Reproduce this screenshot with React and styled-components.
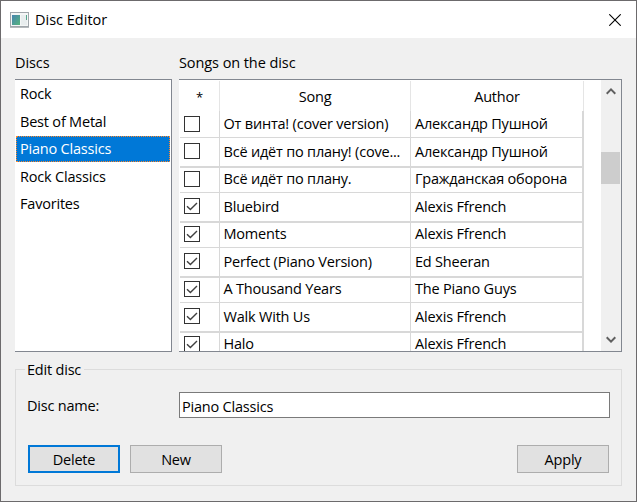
import React from "react";
import styled, { createGlobalStyle, css } from "styled-components";

const Global = createGlobalStyle`
  * { box-sizing: border-box; }
  body { margin: 0; overflow: hidden; }
`;

const Window = styled.div`
  width: 637px;
  height: 502px;
  display: flex;
  flex-direction: column;
  border: 1px solid #6c6a6c;
  background: #f0f0f0;
  color: #000;
  font: 14.5px/20px "Open Sans", "Noto Sans", sans-serif;
  letter-spacing: -0.2px;
`;

const TitleBar = styled.header`
  height: 37px;
  flex: none;
  display: flex;
  align-items: center;
  padding: 0 15px 0 9px;
  background: #fff;
`;

const Title = styled.span`
  flex: 1;
  margin-left: 6px;
  letter-spacing: 0;
`;

const Body = styled.main`
  flex: 1;
  display: flex;
  flex-direction: column;
  padding: 15px 14px;
`;

const Columns = styled.div`
  display: grid;
  grid-template-columns: 157px 443px;
  column-gap: 7px;
`;

const Label = styled.div`
  white-space: nowrap;
  letter-spacing: -0.08px;
`;

const ListBox = styled.div`
  height: 273px;
  margin-top: 6px;
  padding: 1px 1px 0;
  display: flex;
  flex-direction: column;
  gap: 1.5px;
  background: #fff;
  border: 1px solid #828790;
  border-left: 0;
`;

const ListItem = styled.div`
  height: 26px;
  padding-left: 4px;
  line-height: 25px;
  ${(p) =>
    p.$selected &&
    css`
      padding-left: 3px;
      line-height: 23px;
      color: #fff;
      background: #0078d7;
      border: 1px dotted #ff8728;
    `}
`;

const TableBox = styled.div`
  height: 273px;
  margin-top: 6px;
  display: flex;
  justify-content: space-between;
  background: #fff;
  border: 1px solid #828790;
  border-left: 0;
  overflow: hidden;
`;

const Table = styled.div`
  width: 405px;
  padding-left: 1px;
`;

const HeaderRow = styled.div`
  height: 31px;
  padding-top: 1px;
  display: grid;
  grid-template-columns: 40px 191px 173px;
`;

const HeaderCell = styled.div`
  border-right: 1px solid #e5e5e5;
  text-align: center;
  line-height: 32px;
  font-size: ${(p) => (p.$small ? "13px" : "inherit")};
`;

const Row = styled.div`
  display: grid;
  grid-template-columns: 40px 191px 173px;
  height: ${(p) => (p.$even ? 28 : 27)}px;
`;

const Cell = styled.div`
  border-right: ${(p) => (p.$last ? 2 : 1)}px solid #d8d8d8;
  border-bottom: ${(p) => (p.$even ? 2 : 1)}px solid #d8d8d8;
  padding-left: 4px;
  line-height: ${(p) => (p.$even ? 28 : 26)}px;
  white-space: nowrap;
`;

const SongCell = styled(Cell)`
  padding-left: 3.5px;
`;

const CheckBox = styled.span`
  display: block;
  width: 16px;
  height: 16px;
  margin-top: 5px;
  border: 1px solid #333;
  background: #fff;
  svg { display: block; }
`;

const ScrollBar = styled.div`
  width: 20px;
  display: flex;
  flex-direction: column;
  align-items: center;
  padding: 7px 1px 7px 0;
  background: #f0f0f0;
`;

const Thumb = styled.div`
  width: 19px;
  height: 32px;
  margin: 57px 0 auto;
  background: #cdcdcd;
`;

const Frame = styled.fieldset`
  width: 607px;
  height: 127px;
  margin: 7px 0 0;
  padding: 13px 11px 0;
  border: 1px solid #dcdcdc;
`;

const Legend = styled.legend`
  margin-left: -2px;
  padding: 0 3px 0 2px;
  height: 20px;
  line-height: 22px;
`;

const Field = styled.div`
  display: flex;
  align-items: center;
  height: 26px;
`;

const FieldLabel = styled.label`
  width: 152px;
  padding-top: 2px;
`;

const Input = styled.div`
  width: 431px;
  height: 26px;
  padding-left: 2px;
  line-height: 27px;
  background: #fff;
  border: 1px solid #7a7a7a;
`;

const Buttons = styled.div`
  display: flex;
  gap: 10px;
  margin: 27px 1px 0;
`;

const Button = styled.button`
  width: 92px;
  height: 28px;
  padding: 2px 0 0;
  margin-left: ${(p) => (p.$end ? "auto" : "0")};
  font: inherit;
  letter-spacing: inherit;
  color: #000;
  background: #e1e1e1;
  border: ${(p) => (p.$focus ? "2px solid #0078d7" : "1px solid #adadad")};
`;

const AppIcon = () => (
  <svg width="19" height="16" viewBox="0 0 19 16">
    <defs>
      <linearGradient id="screen" x1="0" y1="0" x2="1" y2="1">
        <stop offset="0" stopColor="#4784b0" />
        <stop offset="1" stopColor="#55b47c" />
      </linearGradient>
    </defs>
    <rect x="0.5" y="0.5" width="18" height="14" fill="#f4f6f6" stroke="#a0a6ab" />
    <rect x="2" y="3" width="8" height="10" fill="url(#screen)" />
    <rect x="11" y="3" width="6" height="10" fill="#e8edee" />
    <path d="M16.5 3v5" stroke="#54a58c" strokeWidth="1" />
    <path d="M0 15.5h19" stroke="#b5b9bc" />
  </svg>
);

const CloseIcon = () => (
  <svg width="12" height="12" viewBox="0 0 12 12">
    <path d="M0.3 0.3L11.7 11.7M11.7 0.3L0.3 11.7" stroke="#000" strokeWidth="1.1" />
  </svg>
);

const Chevron = ({ down }) => (
  <svg width="10" height="8" viewBox="0 0 10 8">
    <path d={down ? "M0.7 1.3L5 5.6L9.3 1.3" : "M0.7 6.7L5 2.4L9.3 6.7"} fill="none" stroke="#606060" strokeWidth="2" />
  </svg>
);

const Tick = () => (
  <svg width="14" height="14" viewBox="0 0 14 14">
    <path d="M2 7.2L5.4 10.6L12 4" fill="none" stroke="#404040" strokeWidth="1.4" />
  </svg>
);

const discs = ["Rock", "Best of Metal", "Piano Classics", "Rock Classics", "Favorites"];

const songs = [
  [false, "От винта! (cover version)", "Александр Пушной"],
  [false, "Всё идёт по плану! (cove...", "Александр Пушной"],
  [false, "Всё идёт по плану.", "Гражданская оборона"],
  [true, "Bluebird", "Alexis Ffrench"],
  [true, "Moments", "Alexis Ffrench"],
  [true, "Perfect (Piano Version)", "Ed Sheeran"],
  [true, "A Thousand Years", "The Piano Guys"],
  [true, "Walk With Us", "Alexis Ffrench"],
  [true, "Halo", "Alexis Ffrench"],
];

export default function App() {
  return (
    <Window>
      <Global />
      <TitleBar>
        <AppIcon />
        <Title>Disc Editor</Title>
        <CloseIcon />
      </TitleBar>
      <Body>
        <Columns>
          <div>
            <Label>Discs</Label>
            <ListBox>
              {discs.map((d) => (
                <ListItem key={d} $selected={d === "Piano Classics"}>{d}</ListItem>
              ))}
            </ListBox>
          </div>
          <div>
            <Label>Songs on the disc</Label>
            <TableBox>
              <Table>
                <HeaderRow>
                  <HeaderCell $small>*</HeaderCell>
                  <HeaderCell>Song</HeaderCell>
                  <HeaderCell>Author</HeaderCell>
                </HeaderRow>
                {songs.map(([on, song, author], i) => {
                  const even = i % 2 === 1;
                  return (
                    <Row key={song} $even={even}>
                      <Cell $even={even}><CheckBox>{on && <Tick />}</CheckBox></Cell>
                      <SongCell $even={even}>{song}</SongCell>
                      <Cell $even={even} $last>{author}</Cell>
                    </Row>
                  );
                })}
              </Table>
              <ScrollBar>
                <Chevron />
                <Thumb />
                <Chevron down />
              </ScrollBar>
            </TableBox>
          </div>
        </Columns>
        <Frame>
          <Legend>Edit disc</Legend>
          <Field>
            <FieldLabel>Disc name:</FieldLabel>
            <Input>Piano Classics</Input>
          </Field>
          <Buttons>
            <Button $focus>Delete</Button>
            <Button>New</Button>
            <Button $end>Apply</Button>
          </Buttons>
        </Frame>
      </Body>
    </Window>
  );
}
